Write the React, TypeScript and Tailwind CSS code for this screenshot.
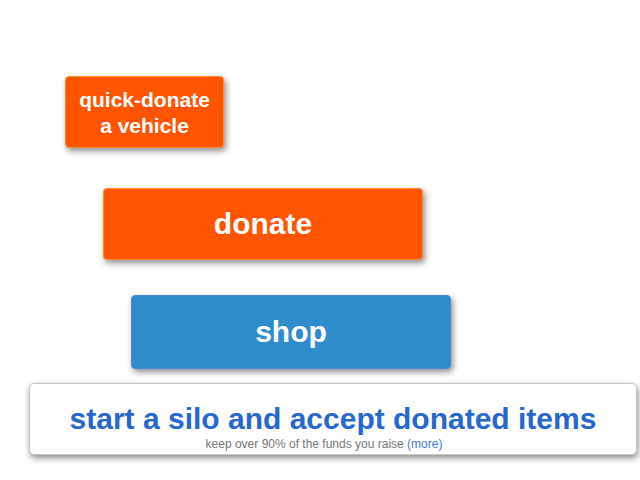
import React from "react";

const base = "rounded-[4px] border font-bold text-white text-center shadow-[2px_3px_6px_rgba(0,0,0,0.45)]";

export default function App() {
  return (
    <main className="flex min-h-screen flex-col items-start bg-white pt-[76px] font-['Liberation_Sans',Arial,sans-serif]">
      <button className={`${base} ml-[65px] h-[72px] w-[159px] border-[#ff8c2e] bg-[#ff5500] pt-[2px] text-[21px] leading-[26px]`}>
        quick-donate<br />a vehicle
      </button>
      <button className={`${base} mt-10 ml-[103px] h-[72px] w-1/2 border-[#ff8c2e] bg-[#ff5500] text-[30px] leading-9`}>
        donate
      </button>
      <button className={`${base} mt-[35px] ml-[131px] h-[74px] w-1/2 border-[#4f8ad8] bg-[#2e8ccc] text-[30px] leading-9`}>
        shop
      </button>
      <section className="mt-[14px] mr-[3px] ml-[29px] h-[72px] self-stretch rounded-[5px] border border-[#c4c4c4] bg-white pt-[17px] text-center shadow-[1px_3px_6px_rgba(0,0,0,0.45)]">
        <h1 className="text-[30px] leading-9 font-bold text-[#2868cc]">start a silo and accept donated items</h1>
        <p className="pr-[18px] text-[12px] leading-[14px] text-[#777777]">
          keep over 90% of the funds you raise <a href="#more" className="text-[#3b7bd8]">(more)</a>
        </p>
      </section>
    </main>
  );
}
